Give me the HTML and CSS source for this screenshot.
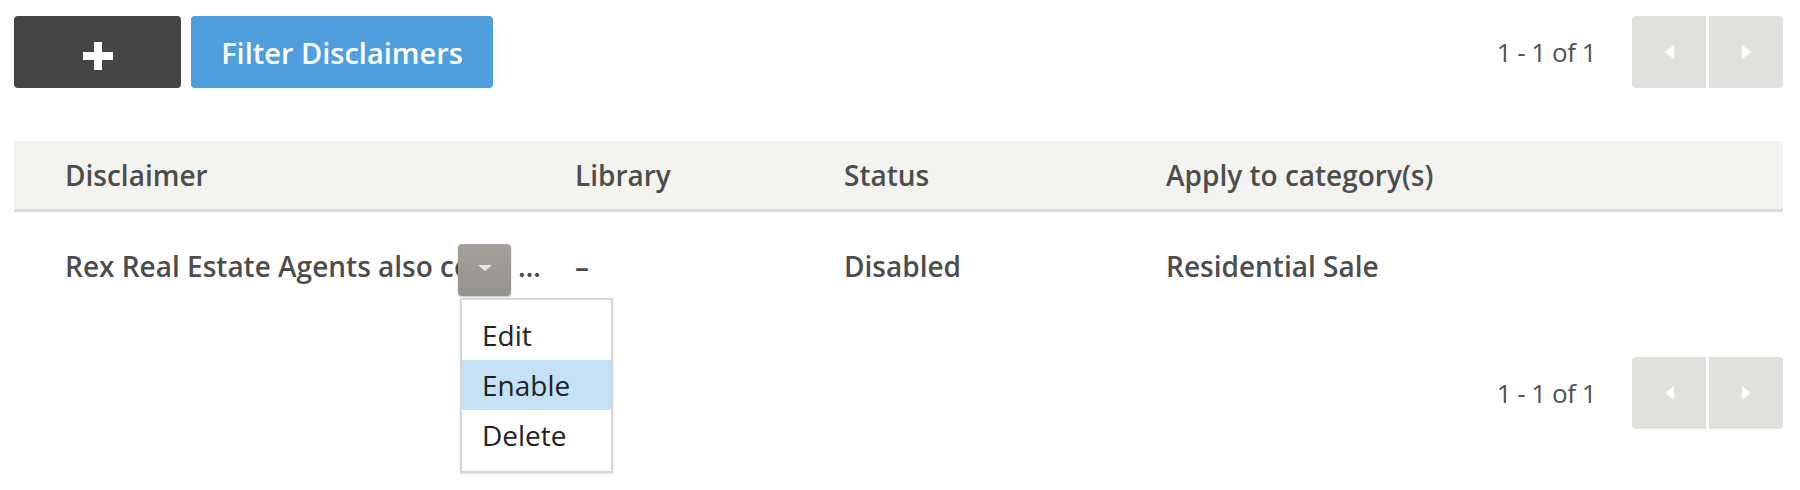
FILE: index.html
```html
<!DOCTYPE html>
<html lang="en">
<head>
<meta charset="utf-8">
<title>Disclaimers</title>
<link rel="stylesheet" href="styles.css">
</head>
<body>
<div class="page">
  <div class="toolbar">
    <button class="btn btn-add" aria-label="Add">
      <svg width="30" height="28" viewBox="0 0 30 28"><rect x="11" y="0" width="8" height="28" fill="#fff"/><rect x="0" y="10" width="30" height="8" fill="#fff"/></svg>
    </button>
    <button class="btn btn-filter">Filter Disclaimers</button>
    <div class="pager">
      <span class="count">1 - 1 of 1</span>
      <button class="pbtn" aria-label="Previous"><span class="tri tri-left"></span></button>
      <button class="pbtn" aria-label="Next"><span class="tri tri-right"></span></button>
    </div>
  </div>

  <div class="table">
    <div class="thead">
      <div class="cell">Disclaimer</div>
      <div class="cell">Library</div>
      <div class="cell">Status</div>
      <div class="cell">Apply to category(s)</div>
    </div>
    <div class="trow">
      <div class="cell cell-main">
        <span class="clip">Rex Real Estate Agents also contribute to the property listing</span>
        <span class="dots">…</span>
        <button class="trigger" aria-label="Actions"><span class="tri tri-down"></span></button>
        <ul class="menu">
          <li class="item">Edit</li>
          <li class="item active">Enable</li>
          <li class="item">Delete</li>
        </ul>
      </div>
      <div class="cell">–</div>
      <div class="cell">Disabled</div>
      <div class="cell">Residential Sale</div>
    </div>
  </div>

  <div class="footer">
    <div class="pager">
      <span class="count">1 - 1 of 1</span>
      <button class="pbtn" aria-label="Previous"><span class="tri tri-left"></span></button>
      <button class="pbtn" aria-label="Next"><span class="tri tri-right"></span></button>
    </div>
  </div>
</div>
</body>
</html>
```

FILE: styles.css
```css
* { box-sizing: border-box; }
html, body { margin: 0; background: #fff; }
body { font-family: "Open Sans", "Liberation Sans", sans-serif; color: #4d4d4d; }

.page { padding: 16px 17px 0 14px; min-height: 490px; }

.toolbar { display: flex; align-items: center; height: 72px; }

.btn {
  border: 0; border-radius: 4px; height: 72px; padding: 0; margin: 0;
  font-family: inherit; cursor: pointer;
}
.btn-add {
  width: 167px; background: #444444;
  display: flex; align-items: center; justify-content: center; padding-top: 8px;
}
.btn-filter {
  width: 302px; margin-left: 10px; background: #4f9fdf; color: #fff;
  font-size: 29px; font-weight: 600;
}

.pager { margin-left: auto; display: flex; align-items: center; gap: 3px; }
.count { font-size: 26px; color: #505050; margin-right: 33px; letter-spacing: -0.5px; }
.pbtn {
  width: 74px; height: 72px; border: 0; padding: 0; background: #e1e0dc;
  display: flex; align-items: center; justify-content: center;
}
.pbtn:first-of-type { border-radius: 4px 0 0 4px; }
.pbtn:last-child { border-radius: 0 4px 4px 0; }

.tri { display: block; width: 0; height: 0; }
.tri-left { border-top: 7px solid transparent; border-bottom: 7px solid transparent; border-right: 9px solid #fff; }
.tri-right { border-top: 7px solid transparent; border-bottom: 7px solid transparent; border-left: 9px solid #fff; }
.tri-down { border-left: 7px solid transparent; border-right: 7px solid transparent; border-top: 6px solid #e6e5e0; }

.table { margin-top: 53px; }
.thead, .trow {
  display: grid; grid-template-columns: 510px 269px 322px 1fr; align-items: center;
}
.thead { height: 71px; background: #f3f3ef; border-bottom: 3px solid #deddd7; }
.trow { height: 108px; }
.cell { padding-left: 51px; font-size: 28px; font-weight: 600; white-space: nowrap; }
.cell-main { position: relative; height: 100%; display: flex; align-items: center; }
.clip { display: block; width: 393px; overflow: hidden; white-space: nowrap; flex: none; }
.dots { margin-left: 60px; font-weight: 600; }

.trigger {
  position: absolute; left: 444px; top: 32px; width: 53px; height: 52px;
  border: 0; border-radius: 4px; padding: 0;
  background: linear-gradient(#a3a199, #94928a);
  box-shadow: 0 1px 2px rgba(0,0,0,0.25);
  display: flex; align-items: center; justify-content: center; padding-bottom: 4px;
}

.menu {
  position: absolute; left: 446px; top: 86px; width: 153px; z-index: 2;
  margin: 0; padding: 10px 0 11px; list-style: none; background: #fff;
  border: 2px solid #d6d6d6; box-shadow: 0 1px 2px rgba(0,0,0,0.12);
}
.item {
  height: 50px; display: flex; align-items: center; padding-left: 20px;
  font-size: 28px; font-weight: 400; color: #222;
}
.item.active { background: #c4e1f5; }

.footer { display: flex; margin-top: 37px; height: 72px; }
```
